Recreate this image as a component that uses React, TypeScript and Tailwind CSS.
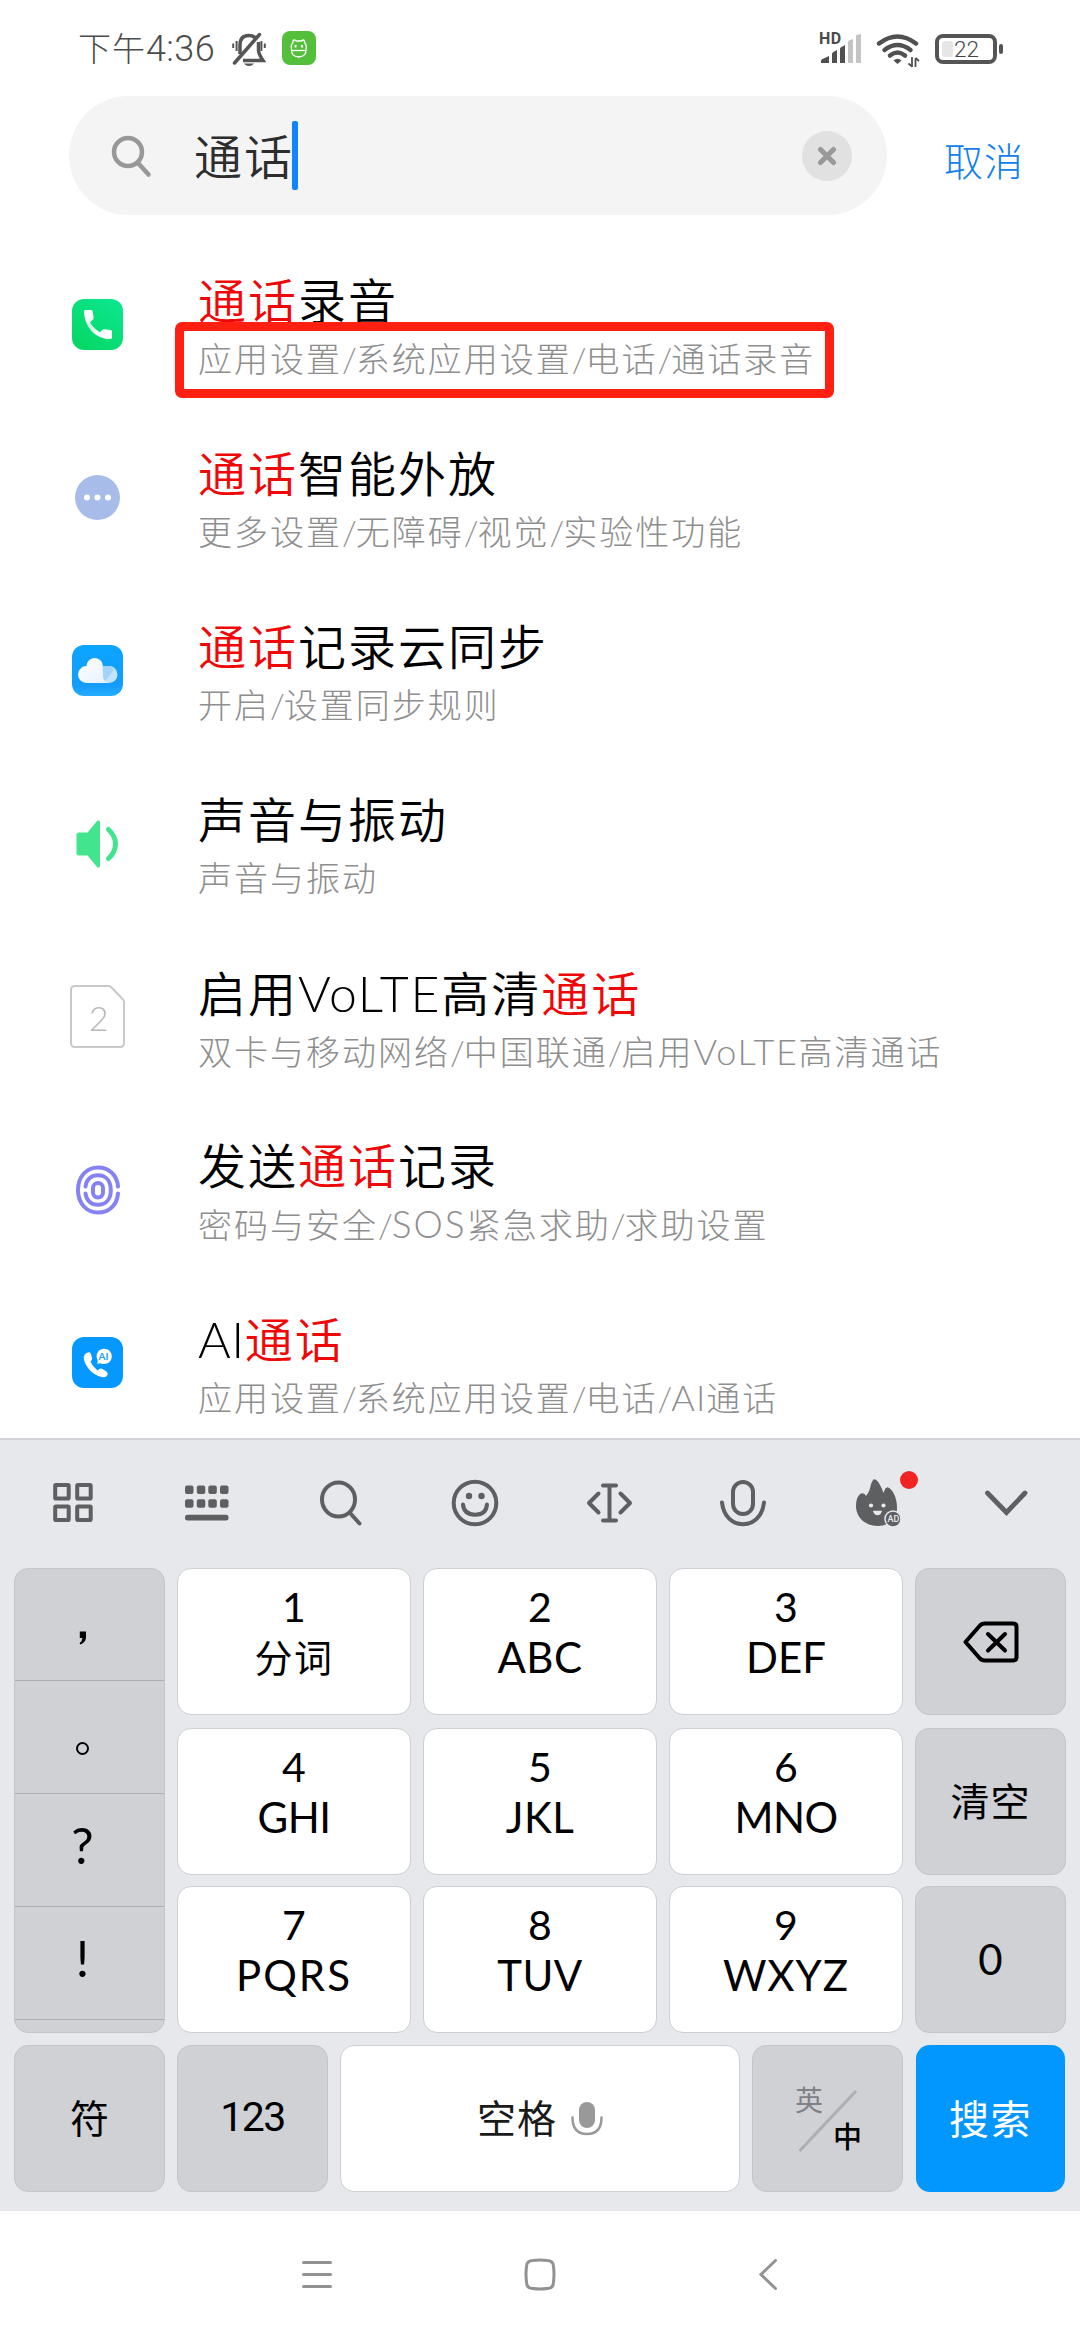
import type { ReactNode } from "react";

const FONT = "font-['Lato','Noto_Sans_CJK_SC',sans-serif]";

type Segment = { text: string; hit?: boolean; style?: string };
type Result = { icon: ReactNode; title: Segment[]; path: Segment[]; marked?: boolean };

function PhoneIcon() {
  return (
    <svg width="51" height="51" viewBox="0 0 51 51">
      <defs>
        <linearGradient id="phoneBg" x1="1" y1="0" x2="0.3" y2="1">
          <stop offset="0" stopColor="#0ce892" />
          <stop offset="1" stopColor="#06d767" />
        </linearGradient>
        <linearGradient id="phoneFg" x1="0" y1="0" x2="1" y2="1">
          <stop offset="0.2" stopColor="#fff" />
          <stop offset="0.42" stopColor="#c6f9e0" />
          <stop offset="0.62" stopColor="#fff" />
        </linearGradient>
      </defs>
      <rect width="51" height="51" rx="12" fill="url(#phoneBg)" />
      <path
        d="M13.500 11H19Q20.500 11 20.700 12.500L21.700 18.500Q21.900 20.200 20.500 21L18 23.200Q21.500 29.500 28 33.200L30 31.200Q31 30.100 32.500 30.300L38.500 31Q40 31.200 40 32.700V38.500Q40 40 38.500 40C24.500 40.500 12.500 28.500 12 12.700Q12 11 13.500 11Z"
        fill="url(#phoneFg)"
      />
    </svg>
  );
}

function DotsIcon() {
  return (
    <svg width="45" height="45" viewBox="0 0 45 45">
      <circle cx="22.500" cy="22.500" r="22.500" fill="#a8bce9" />
      <circle cx="12" cy="22.500" r="3" fill="#fff" />
      <circle cx="22.500" cy="22.500" r="3" fill="#fff" />
      <circle cx="33" cy="22.500" r="3" fill="#fff" />
    </svg>
  );
}

function CloudIcon() {
  return (
    <svg width="51" height="51" viewBox="0 0 51 51">
      <defs>
        <linearGradient id="cloudBg" x1="0" y1="0" x2="0" y2="1">
          <stop offset="0" stopColor="#0ba5ff" />
          <stop offset="0.8" stopColor="#149cfa" />
          <stop offset="1" stopColor="#25adff" />
        </linearGradient>
        <linearGradient id="cloudFg" x1="0" y1="0" x2="1" y2="1">
          <stop offset="0" stopColor="#fff" />
          <stop offset="1" stopColor="#e6f1fd" />
        </linearGradient>
      </defs>
      <rect width="51" height="51" rx="12" fill="url(#cloudBg)" />
      <path d="M30.800 21H37A8.500 8.500 0 0 1 37 38H29Z" fill="#c4e3fe" />
      <path d="M30.800 21H36Q39.500 21.500 41.500 25L33 36.500L30.800 34Z" fill="#a3d3fd" />
      <path
        d="M14.500 38A8.500 8.500 0 0 1 14.500 21A8.200 8.200 0 0 1 30.800 20V30.500Q31 36 36 38Z"
        fill="url(#cloudFg)"
      />
    </svg>
  );
}

function SoundIcon() {
  return (
    <svg width="45" height="50" viewBox="0 0 45 50">
      <path
        d="M4 13.500H12.500L22 2Q24 .6 25 2.500V47.500Q24 49.400 22 48L12.500 36.500H4Q1.500 36.500 1.500 34V16Q1.500 13.500 4 13.500Z"
        fill="#42e48e"
      />
      <path d="M33.500 10.500Q40.500 17 40.500 25T33.500 39.500" fill="none" stroke="#42e48e" strokeWidth="5" strokeLinecap="round" />
    </svg>
  );
}

function SimIcon() {
  return (
    <div className="relative h-[63px] w-[55px]">
      <svg width="55" height="63" viewBox="0 0 55 63" fill="none">
        <path
          d="M5 1H38.500Q40 1 41 2L53 14.500Q54 15.500 54 17V58Q54 62 50 62H5Q1 62 1 58V5Q1 1 5 1Z"
          stroke="#c9c9c9"
          strokeWidth="2"
        />
      </svg>
      <span className="absolute left-0 top-[13px] w-[57px] text-center text-[34px] font-light leading-[40px] text-[#b8b8b8]">2</span>
    </div>
  );
}

function FingerprintIcon() {
  return (
    <svg width="44" height="50" viewBox="0 0 44 50" fill="none" stroke="#8583f2" strokeWidth="4" strokeLinecap="round">
      <path d="M42 21.500C41 9 32 2.500 22 2.500C11 2.500 2 11 2 25S11 47.500 22 47.500C32 47.500 41 41 42 28.500" />
      <path d="M9.500 21.500C10.500 14 15.500 10.200 22 10.200C30 10.200 34.800 16 34.800 25S30 39.800 22 39.800C15.500 39.800 10.500 36 9.500 28.500" />
      <rect x="17" y="18" width="10" height="14.500" rx="5" />
    </svg>
  );
}

function AiPhoneIcon() {
  return (
    <div className="relative h-[51px] w-[51px] rounded-[12px] bg-[#0599ff]">
      <svg width="51" height="51" viewBox="0 0 51 51">
        <path
          d="M14.500 16L17 15.300Q18.500 15.300 19 17L20.200 21.500Q20.300 23 18.500 24.500Q20.500 29.500 25.500 33.500Q27.500 31.200 29.500 31.500L34.500 34.500Q36.500 36 35.500 38Q34 40.500 31 40.200C20.500 39 11.500 27.500 11.800 20Q12 17.500 14.500 16Z"
          fill="#fff"
        />
        <path d="M31.500 11.700a7.700 7.700 0 1 1-3 14.500l-3.300.6l.6-3.300a7.700 7.700 0 0 1 5.700-11.800Z" fill="#fff" />
      </svg>
      <span className="absolute left-[24px] top-[13px] w-[15px] text-center text-[10px] font-bold leading-[12px] text-[#1b9dfb]">AI</span>
    </div>
  );
}

const results: Result[] = [
  {
    icon: <PhoneIcon />,
    title: [{ text: "通话", hit: true }, { text: "录音" }],
    path: [{ text: "应用设置/系统应用设置/电话/通话录音" }],
    marked: true,
  },
  {
    icon: <DotsIcon />,
    title: [{ text: "通话", hit: true }, { text: "智能外放" }],
    path: [{ text: "更多设置/无障碍/视觉/实验性功能" }],
  },
  {
    icon: <CloudIcon />,
    title: [{ text: "通话", hit: true }, { text: "记录云同步" }],
    path: [{ text: "开启/设置同步规则" }],
  },
  {
    icon: <SoundIcon />,
    title: [{ text: "声音与振动" }],
    path: [{ text: "声音与振动" }],
  },
  {
    icon: <SimIcon />,
    title: [
      { text: "启用" },
      { text: "VoLTE", style: "text-[50px] tracking-[1.700px]" },
      { text: "高清" },
      { text: "通话", hit: true },
    ],
    path: [
      { text: "双卡与移动网络/中国联通/启用" },
      { text: "VoLTE", style: "text-[36px] tracking-[1.600px]" },
      { text: "高清通话" },
    ],
  },
  {
    icon: <FingerprintIcon />,
    title: [{ text: "发送" }, { text: "通话", hit: true }, { text: "记录" }],
    path: [
      { text: "密码与安全/" },
      { text: "SOS", style: "text-[37px] tracking-[2px]" },
      { text: "紧急求助/求助设置" },
    ],
  },
  {
    icon: <AiPhoneIcon />,
    title: [{ text: "AI", style: "text-[50px] tracking-[0.500px]" }, { text: "通话", hit: true }],
    path: [
      { text: "应用设置/系统应用设置/电话/" },
      { text: "AI", style: "text-[36px] tracking-[1px]" },
      { text: "通话" },
    ],
  },
];

/** Path separators sit tighter than the surrounding characters. */
function PathText({ text }: { text: string }) {
  return (
    <>
      {text.split(/(\/)/).map((part, i) =>
        part === "/" ? (
          <span key={i} className="tracking-[-1px]">
            /
          </span>
        ) : (
          part
        ),
      )}
    </>
  );
}

function ResultRow({ icon, title, path, marked }: Result) {
  return (
    <li className="relative flex h-[173px] shrink-0">
      <div className="ml-[70px] flex w-[55px] items-center justify-center">{icon}</div>
      <div className="ml-[73px] whitespace-nowrap pt-[32px]">
        <div className="h-[63px] text-[48px] font-[350] leading-[62px] tracking-[2px] text-black">
          {title.map((s, i) => (
            <span key={i} className={s.hit ? "text-[#f00808]" : s.style}>
              {s.text}
            </span>
          ))}
        </div>
        <div className="text-[34px] font-light leading-[52px] tracking-[2px] text-[#8e8e8e]">
          {path.map((s, i) => (
            <span key={i} className={s.style}>
              <PathText text={s.text} />
            </span>
          ))}
        </div>
      </div>
      {marked && <div className="absolute left-[175px] top-[84px] h-[76px] w-[659px] rounded-[7px] border-[9px] border-[#ff2012]" />}
    </li>
  );
}

function StatusBar() {
  return (
    <header className="flex h-[96px] shrink-0 items-start text-[#4b4b4b]">
      <span className="ml-[78px] mt-[25px] w-[154px] whitespace-nowrap font-['Roboto','Noto_Sans_CJK_SC',sans-serif] text-[36px] font-light leading-[48px] tracking-[0.400px]">
        <span className="text-[33px] tracking-[1px]">下午</span>4:36
      </span>
      <svg className="mt-[32px]" width="34" height="34" viewBox="0 0 34 34" fill="none" stroke="#555" strokeWidth="3.500">
        <path d="M8 22V13Q8 3.500 17 3.500Q21 3.500 23.500 6" />
        <path d="M26.500 10V18Q26.500 22 31 28.500H11" />
        <path d="M2.500 31L27.500 2.500" strokeLinecap="round" />
        <path d="M12 31.500H22Q20 34 17 34T12 31.500Z" fill="#555" stroke="none" />
        <path d="M1.200 11.500V16M4.600 9V19M29.400 9V19M32.800 11.500V16" strokeWidth="2" />
      </svg>
      <svg className="ml-[16px] mt-[31px]" width="34" height="34" viewBox="0 0 34 34" fill="none" stroke="#fff" strokeWidth="1.300">
        <rect width="34" height="34" rx="8" fill="#53bf3b" stroke="none" />
        <path d="M9.500 18.500Q8.500 14 11 11.500L11 10Q12 8 14 10H19.500Q21.500 8 22.500 10V11.500Q25 14 24 18.500Q24.500 25.500 16.800 26Q9 25.500 9.500 18.500Z" />
        <path d="M9.500 19.500H24" />
        <path d="M13.500 14v2.500M20 14v2.500" strokeWidth="2" />
      </svg>
      <div className="relative ml-[503px] mt-[32px] h-[34px] w-[43px]">
        <svg width="43" height="34" viewBox="0 0 43 34" fill="#505050">
          <path d="M2 31V29Q2 28 3 27.300L10 24V31Q10 31 9 31Z" />
          <path d="M13 31V22Q13 21 14 20.300L18 18V31Z" />
          <path d="M21 31V17Q21 16 22 15.300L26 13V31Z" />
          <path d="M29 31V10Q29 9 30 8.500L34 7V31Z" fill="#c4c4c4" />
          <path d="M37 31V4Q37 3 38 2.800L42 2V31Z" fill="#c4c4c4" />
        </svg>
        <span className="absolute left-0 top-[-1px] font-['Roboto',sans-serif] text-[16px] font-bold leading-[16px] tracking-[0.500px]">HD</span>
      </div>
      <svg className="ml-[14px] mt-[32px]" width="44" height="36" viewBox="0 0 44 36" fill="none" stroke="#505050" strokeWidth="4.500" strokeLinecap="round">
        <path d="M3 11.500Q21.500-2.500 40 11.500" />
        <path d="M8.500 18Q21.500 8 34.500 18" />
        <path d="M14 23.500Q21.500 17.500 29 23.500" />
        <path d="M17.500 28.500Q21.500 25 25.500 28.500L21.500 32Z" fill="#505050" stroke="none" />
        <path d="M36 25V35M36 34.500L32.500 31.500M39.500 35V26M39.500 26L43 29" strokeWidth="1.800" strokeLinecap="butt" />
      </svg>
      <div className="ml-[15px] mt-[34px] flex items-center">
        <div className="relative h-[30px] w-[62px] rounded-[8px] border-4 border-[#555]">
          <div className="ml-[3px] mt-[3px] h-[16px] w-[11px] rounded-[3px] bg-[#e6e6e6]" />
          <span className="absolute left-[15px] top-[-1px] font-['Roboto',sans-serif] text-[22.500px] font-light leading-[24px] text-[#444]">22</span>
        </div>
        <div className="ml-[2px] h-[10px] w-[4px] rounded-[2px] bg-[#555]" />
      </div>
    </header>
  );
}

function SearchBar() {
  return (
    <div className="flex h-[142px] shrink-0 items-start">
      <div className="ml-[69px] flex h-[119px] w-[818px] items-center rounded-full bg-[#f4f4f4]">
        <svg className="ml-[42px] shrink-0" width="42" height="44" viewBox="0 0 42 44" fill="none" stroke="#989898" strokeWidth="4.500" strokeLinecap="round">
          <circle cx="17" cy="18" r="14" />
          <path d="M27 29L37.500 40.500" />
        </svg>
        <span className="ml-[41px] mt-[3px] whitespace-nowrap text-[48px] font-[350] leading-[70px] tracking-[2px] text-[#2d2d2d]">通话</span>
        <span className="ml-[-2px] h-[69px] w-[6px] rounded-[2px] bg-[#1284ff]" />
        <div className="ml-auto mr-[35px] flex h-[50px] w-[50px] items-center justify-center rounded-full bg-[#e1e1e1]">
          <svg width="20" height="20" viewBox="0 0 20 20" stroke="#999" strokeWidth="5" strokeLinecap="round">
            <path d="M3.500 3.500L16.500 16.500M16.500 3.500L3.500 16.500" />
          </svg>
        </div>
      </div>
      <span className="ml-[57px] mt-[39px] whitespace-nowrap text-[39px] font-light leading-[52px] tracking-[1px] text-[#1280ea]">取消</span>
    </div>
  );
}

function ToolIcon({ children, width = "w-[134px]" }: { children: ReactNode; width?: string }) {
  return (
    <div className={`relative flex h-full items-center justify-center ${width}`}>
      <svg width="60" height="60" viewBox="0 0 60 60" fill="none" stroke="#5e5f61" strokeWidth="4" strokeLinecap="round" strokeLinejoin="round">
        {children}
      </svg>
    </div>
  );
}

function Toolbar() {
  return (
    <div className="flex h-[128px] shrink-0 pb-[2px] pl-[6px]">
      <ToolIcon>
        <g strokeLinejoin="miter">
          <rect x="12.200" y="12" width="13.500" height="13.500" rx=".8" />
          <rect x="34.200" y="12" width="13.500" height="13.500" rx=".8" />
          <rect x="12.200" y="33.500" width="13.500" height="13.500" rx=".8" />
          <rect x="34.200" y="33.500" width="13.500" height="13.500" rx=".8" />
        </g>
      </ToolIcon>
      <ToolIcon>
        <g fill="#5e5f61" stroke="none">
          {[12.5, 26.2].map((y) =>
            [8, 19.8, 31.3, 43].map((x) => <rect key={`${x}-${y}`} x={x} y={y} width="8.500" height="8.500" rx="2" />),
          )}
          <rect x="8" y="41.700" width="43.500" height="5.800" rx="2.500" />
        </g>
      </ToolIcon>
      <ToolIcon>
        <ellipse cx="27.500" cy="26.500" rx="16.500" ry="17" />
        <path d="M39.500 40.500L48.500 50.500" />
      </ToolIcon>
      <ToolIcon>
        <circle cx="30" cy="30" r="21.300" />
        <path d="M18 31.500Q19 41.500 30 41.700T42 31.500" />
        <circle cx="24" cy="23" r="3.200" fill="#5e5f61" stroke="none" />
        <circle cx="36.500" cy="23" r="3.200" fill="#5e5f61" stroke="none" />
      </ToolIcon>
      <ToolIcon>
        <path d="M24 12.500H37M24 47.500H37M30.500 13V47M19.500 20.500L10 30L19.500 39.500M41.500 20.500L51 30L41.500 39.500" />
      </ToolIcon>
      <ToolIcon>
        <rect x="20" y="9" width="20" height="32" rx="10" />
        <path d="M9 29.500C10.500 43 19 51.200 30 51.200S49.500 43 51 29.500" />
      </ToolIcon>
      <div className="relative flex h-full w-[134px] items-center justify-center">
        <svg width="60" height="60" viewBox="0 0 60 60">
          <path
            d="M26 7C28 5 31 8 33 12Q35.500 16.500 36.500 20Q38 14.500 40.500 14.200C45 15.500 50.500 24 50 36C50 46 41 53 31 53C18 53 9 44 9 33C9 24 12.500 20.500 15.500 20.200Q18 20.500 19 23Q23 18 24 11Z"
            fill="#5e5f61"
          />
          <path d="M27 38.500Q28 41.500 30.500 41.500T34 38.500Z" fill="#e6e8eb" stroke="#e6e8eb" strokeWidth="1.500" />
          <circle cx="24" cy="32.500" r="2.100" fill="#e6e8eb" />
          <circle cx="36.500" cy="32.500" r="2.100" fill="#e6e8eb" />
          <circle cx="46" cy="46" r="8" fill="#5e5f61" stroke="#e6e8eb" strokeWidth="1.500" />
        </svg>
        <span className="absolute left-[75px] top-[74px] w-[17px] text-center font-['Roboto',sans-serif] text-[9px] font-medium leading-[10px] text-[#e6e8eb]">
          AD
        </span>
        <span className="absolute left-[90px] top-[31px] h-[18px] w-[18px] rounded-full bg-[#f22323]" />
      </div>
      <ToolIcon width="w-[123px]">
        <path d="M11.500 20L30.500 39.500L49 20" strokeWidth="4.800" strokeLinejoin="miter" />
      </ToolIcon>
    </div>
  );
}

const GREY_KEY = "border border-[#c4c5c9] bg-[#d0d1d5]";
const WHITE_KEY = "border border-[#cdced2] bg-white";

function DigitKey({ digit, label, labelStyle = "text-[42px]" }: { digit: string; label: string; labelStyle?: string }) {
  return (
    <div className={`flex h-[147px] w-[234px] flex-col items-center rounded-[14px] pt-[13px] ${WHITE_KEY}`}>
      <span className="text-[41px] leading-[50px]">{digit}</span>
      <span className={`whitespace-nowrap leading-[50px] ${labelStyle}`}>{label}</span>
    </div>
  );
}

function Keyboard() {
  return (
    <section className="flex h-[773px] shrink-0 flex-col border-t-2 border-[#d2d3d6] bg-[#e6e8eb] text-black">
      <Toolbar />
      <div className="flex h-[465px] gap-[12px] pl-[14px]">
        <div className={`flex w-[151px] flex-col overflow-hidden rounded-[14px] ${GREY_KEY}`}>
          <div className="flex h-[112px] items-center justify-center border-b border-[#adaeb2] pr-[14px]">
            <svg className="mt-[26px]" width="8" height="14" viewBox="0 0 8 14">
              <path d="M.8 .5H7V6.500Q6.500 11.500 1.500 13.500L.5 12.200Q3.200 10.500 3.500 7H.8Z" />
            </svg>
          </div>
          <div className="flex h-[113px] items-center justify-center border-b border-[#adaeb2] pr-[14px]">
            <span className="mt-[22px] h-[13px] w-[13px] rounded-full border-[2.500px] border-black" />
          </div>
          <div className="flex h-[113px] items-center justify-center border-b border-[#adaeb2] pr-[14px] text-[50px] leading-[60px]">
            <span className="-mt-[11px]">?</span>
          </div>
          <div className="flex h-[113px] items-center justify-center border-b border-[#adaeb2] pr-[14px] text-[50px] leading-[60px]">
            <span className="-mt-[11px]">!</span>
          </div>
        </div>
        <div className="flex flex-col">
          <div className="mb-[13px] flex gap-[12px]">
            <DigitKey digit="1" label="分词" labelStyle="text-[38px] tracking-[1.500px]" />
            <DigitKey digit="2" label="ABC" labelStyle="text-[42px] tracking-[0.500px]" />
            <DigitKey digit="3" label="DEF" />
          </div>
          <div className="mb-[11px] flex gap-[12px]">
            <DigitKey digit="4" label="GHI" labelStyle="text-[42px] tracking-[-0.500px]" />
            <DigitKey digit="5" label="JKL" labelStyle="text-[42px] tracking-[0.500px]" />
            <DigitKey digit="6" label="MNO" labelStyle="text-[42px] tracking-[-0.500px]" />
          </div>
          <div className="flex gap-[12px]">
            <DigitKey digit="7" label="PQRS" labelStyle="text-[42px] tracking-[2px]" />
            <DigitKey digit="8" label="TUV" labelStyle="text-[42px] tracking-[0.500px]" />
            <DigitKey digit="9" label="WXYZ" labelStyle="text-[42px] tracking-[1px]" />
          </div>
        </div>
        <div className="flex flex-col">
          <div className={`mb-[13px] flex h-[147px] w-[151px] items-center justify-center rounded-[14px] ${GREY_KEY}`}>
            <svg width="56" height="42" viewBox="0 0 56 42" fill="none" stroke="#000" strokeWidth="4" strokeLinecap="round" strokeLinejoin="round">
              <path d="M2.500 21L16.500 5Q18.500 2.500 22 2.500H50Q53.500 2.500 53.500 6V36Q53.500 39.500 50 39.500H22Q18.500 39.500 16.500 37Z" />
              <path d="M25 13L42 29.500M42 13L25 29.500" />
            </svg>
          </div>
          <div className={`mb-[11px] flex h-[147px] w-[151px] items-center justify-center rounded-[14px] text-[39px] tracking-[1px] ${GREY_KEY}`}>清空</div>
          <div className={`flex h-[147px] w-[151px] items-center justify-center rounded-[14px] pb-[2px] text-[42px] leading-[50px] ${GREY_KEY}`}>0</div>
        </div>
      </div>
      <div className="mt-[12px] flex h-[147px] gap-[12px] pl-[14px]">
        <div className={`flex w-[151px] items-center justify-center rounded-[14px] text-[39px] ${GREY_KEY}`}>符</div>
        <div className={`flex w-[151px] items-center justify-center rounded-[14px] pb-[2px] font-['Roboto',sans-serif] text-[41px] tracking-[-1.500px] ${GREY_KEY}`}>123</div>
        <div className={`flex w-[400px] items-center justify-center rounded-[14px] text-[39px] tracking-[1px] text-[#1a1a1a] ${WHITE_KEY}`}>
          空格
          <svg className="ml-[14px]" width="32" height="36" viewBox="0 0 32 36" fill="none" stroke="#999" strokeWidth="2.500" strokeLinecap="round">
            <rect x="8" y="1" width="16" height="26" rx="8" fill="#999" stroke="none" />
            <path d="M1.500 16.500Q1.500 33 16 33T30.500 16.500" />
          </svg>
        </div>
        <div className={`relative w-[151px] rounded-[14px] ${GREY_KEY}`}>
          <svg className="absolute left-[45px] top-[43px]" width="60" height="64" viewBox="0 0 60 64" stroke="#aeafb3" strokeWidth="3">
            <path d="M1.500 62L58 2" />
          </svg>
          <span className="absolute left-[42px] top-[38px] text-[28px] leading-[32px] text-[#808185]">英</span>
          <span className="absolute left-[80px] top-[75px] text-[29px] font-medium leading-[32px]">中</span>
        </div>
        <div className="ml-[1px] flex w-[149px] items-center justify-center rounded-[14px] bg-[#0296ff] text-[40px] tracking-[1.500px] text-white">搜索</div>
      </div>
    </section>
  );
}

function NavBar() {
  return (
    <nav className="flex h-[129px] shrink-0 items-start bg-white pt-[46px]">
      <svg className="ml-[302px]" width="30" height="34" viewBox="0 0 30 34" stroke="#929292" strokeWidth="3" strokeLinecap="round">
        <path d="M1.500 5.500H28.500M1.500 17.500H28.500M1.500 29.500H28.500" />
      </svg>
      <svg className="ml-[192px]" width="32" height="34" viewBox="0 0 32 34" fill="none" stroke="#929292" strokeWidth="3">
        <path d="M9 3.500Q16 2.500 23 3.500Q29.500 3.500 29.500 9.500Q30.500 17.500 29.500 25Q29.500 31.500 23 31.500Q16 32.500 9 31.500Q2.500 31.500 2.500 25Q1.500 17.500 2.500 9.500Q2.500 3.500 9 3.500Z" />
      </svg>
      <svg className="ml-[202px]" width="20" height="34" viewBox="0 0 20 34" fill="none" stroke="#929292" strokeWidth="3" strokeLinecap="round">
        <path d="M17.500 3.500L3 17.500L17.500 31.500" />
      </svg>
    </nav>
  );
}

export default function App() {
  return (
    <div className={`flex h-[2340px] w-[1080px] flex-col overflow-hidden bg-white ${FONT}`}>
      <StatusBar />
      <SearchBar />
      <ul className="flex h-[1200px] shrink-0 flex-col overflow-hidden">
        {results.map((r, i) => (
          <ResultRow key={i} {...r} />
        ))}
      </ul>
      <Keyboard />
      <NavBar />
    </div>
  );
}
